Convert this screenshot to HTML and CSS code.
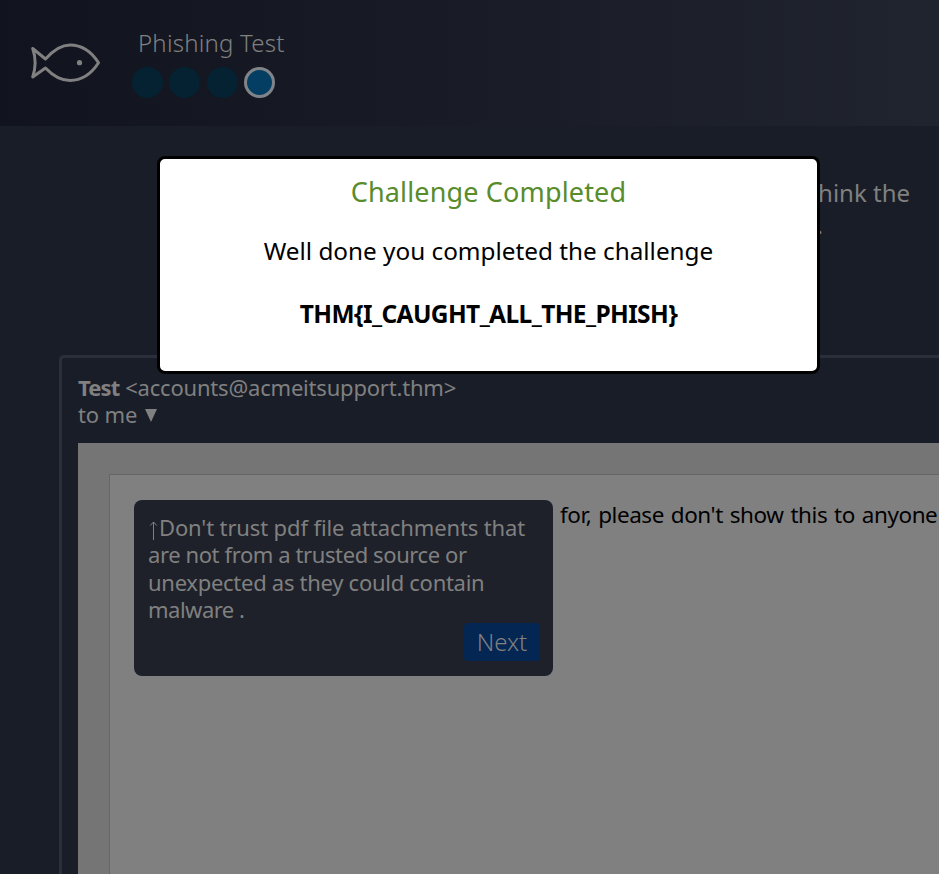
FILE: index.html
```html
<!DOCTYPE html>
<html lang="en">
<head>
<meta charset="utf-8">
<title>Phishing Test</title>
<link rel="stylesheet" href="styles.css">
</head>
<body>
<div class="page">
  <header class="header">
    <svg class="logo" viewBox="0 0 72 42" fill="none" stroke="#808080" stroke-width="3" stroke-linejoin="round">
      <path d="M2.7 6.5L15.5 17C24 7.5 32 3 40 3C51 3 61 9 68.5 20.8C61 32.5 51 38.5 40 38.5C32 38.5 24 35 15.5 26L2.7 35C6 25 6 16 2.7 6.5Z"/>
      <circle cx="49.5" cy="20.7" r="2.6" fill="#808080" stroke="none"/>
    </svg>
    <div class="progress">
      <h1 class="progress-title">Phishing Test</h1>
      <div class="dots"><i class="dot"></i><i class="dot"></i><i class="dot"></i><i class="dot dot-active"></i></div>
    </div>
  </header>
  <div class="intro"><p>think the</p><p class="intro-end">.</p></div>
  <main class="email">
    <div class="sender"><b>Test</b> <span class="address">&lt;accounts@acmeitsupport.thm&gt;</span></div>
    <div class="recipient">to me <span class="caret"></span></div>
    <div class="message">
      <div class="paper">
        <aside class="tip">
          <p class="l1"><svg class="arrow" viewBox="0 0 11 21" stroke="#808080" fill="none"><path d="M5.5 20V2M2.2 5.5L5.5 2L8.8 5.5"/></svg>Don't trust pdf file attachments that</p>
          <p class="l2">are not from a trusted source or</p>
          <p class="l3">unexpected as they could contain</p>
          <p class="l4">malware .</p>
          <button class="next">Next</button>
        </aside>
        <p class="body-text">for, please don't show this to anyone</p>
      </div>
    </div>
  </main>
  <section class="modal">
    <h2 class="modal-title">Challenge Completed</h2>
    <p class="modal-text">Well done you completed the challenge</p>
    <p class="flag">THM{I_CAUGHT_ALL_THE_PHISH}</p>
  </section>
</div>
</body>
</html>
```
FILE: styles.css
```css
* { box-sizing: border-box; }
body { margin: 0; font-family: "Noto Sans", sans-serif; color: #808080; background: #191d27; }
h1, h2, p { margin: 0; font-weight: 400; }
.page { position: relative; width: 939px; height: 874px; overflow: hidden; display: flex; flex-direction: column; background: #191d27; }
.header { flex: none; display: flex; height: 126px; padding: 26px 0 0 30px; background: linear-gradient(90deg, #11141e, #20242f); }
.logo { width: 72px; height: 42px; margin-top: 16px; }
.progress { margin-left: 30px; }
.progress-title { height: 34px; line-height: 34px; padding-left: 6px; margin-bottom: 7px; font-size: 24px; letter-spacing: 0.22px; font-weight: 300; }
.dots { display: flex; gap: 6.4px; }
.dot { width: 31px; height: 31px; border-radius: 50%; background: #042231; }
.dot-active { border: 3px solid #808488; background: #053e63; }
.intro { height: 229px; flex: none; padding: 51px 29px 0 0; text-align: right; font-size: 24px; line-height: 32px; }
.intro-end { padding-right: 87px; }
.email { flex: none; width: 940px; height: 600px; margin-left: 59px; padding: 16px 0 0 16px; border: 3px solid #2b2f3b; border-radius: 5px; font-size: 22px; line-height: 27px; }
.sender { white-space: nowrap; }
.sender b { letter-spacing: -0.85px; }
.address { letter-spacing: -0.2px; }
.recipient { display: flex; align-items: center; gap: 8px; letter-spacing: -0.15px; }
.caret { margin-top: 2px; border: 6.5px solid transparent; border-top: 13px solid #808080; border-bottom: 0; }
.message { height: 500px; margin-top: 15px; padding: 31px 0 0 31px; background: #757575; }
.paper { display: flex; align-items: flex-start; gap: 7px; height: 469px; padding: 25px 0 0 24px; border: 1px solid #666; background: #808080; }
.tip { flex: none; display: flex; flex-direction: column; width: 419px; height: 176px; padding: 14px 13px 15px 14px; border-radius: 8px; background: #1e2129; white-space: nowrap; line-height: 27.3px; }
.arrow { width: 11px; height: 21px; vertical-align: -5px; }
.l1 { letter-spacing: -0.13px; }
.l2 { letter-spacing: -0.4px; }
.l3 { letter-spacing: -0.28px; }
.l4 { letter-spacing: -0.5px; }
.next { align-self: flex-end; width: 76px; height: 38px; padding: 0; border: 0; border-radius: 4px; background: #042652; color: #808080; font: 300 24px/38px "Noto Sans", sans-serif; }
.body-text { flex: none; line-height: 29px; color: #000; font-size: 22.5px; letter-spacing: -0.45px; word-spacing: 1.5px; white-space: nowrap; }
.modal { position: absolute; left: 157px; top: 156px; width: 663px; height: 218px; border: 3px solid #000; border-radius: 8px; background: #fff; color: #000; text-align: center; padding-top: 16px; }
.modal-title { color: #588c2c; font-size: 27px; line-height: 34px; letter-spacing: 0.15px; }
.modal-text { margin-top: 26px; font-size: 24.3px; line-height: 31px; letter-spacing: 0; }
.flag { margin-top: 32px; font-size: 24.5px; line-height: 32px; font-weight: 700; letter-spacing: -0.6px; }
```
